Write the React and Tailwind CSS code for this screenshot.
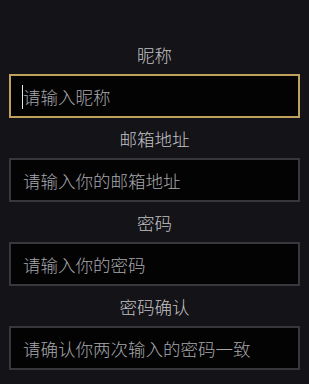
const fields = [
  { label: '昵称', placeholder: '请输入昵称', type: 'text', active: true },
  { label: '邮箱地址', placeholder: '请输入你的邮箱地址', type: 'email' },
  { label: '密码', placeholder: '请输入你的密码', type: 'password' },
  { label: '密码确认', placeholder: '请确认你两次输入的密码一致', type: 'password' },
];

const App = () => {
  return (
    <div
      className="min-h-[384px] w-full bg-[#131318] pt-[43px] pl-[9px] pr-[9px] font-light"
      style={{ fontFamily: '"Noto Sans CJK SC", "Noto Sans", sans-serif' }}
    >
      <form className="flex flex-col gap-[9px]">
        {fields.map((f) => (
          <div key={f.label} className="flex flex-col">
            <label className="block h-6 mb-[7px] text-center text-[17.5px] leading-6 text-[#c2c2c5]">
              {f.label}
            </label>
            <div className="relative">
              <input
                type={f.type}
                placeholder={f.placeholder}
                readOnly
                className={
                  'block w-full h-[44px] bg-[#030304] pl-3 text-[17.5px] font-light text-white placeholder:text-[#a8a8ac] outline-none caret-transparent border-2 ' +
                  (f.active ? 'border-[#bea15a]' : 'border-[#37373c]')
                }
              />
              {/* caret */}
              {f.active && (
                <span className="absolute left-[13px] top-[11px] h-[24px] w-px bg-[#e8e8e8]" />
              )}
            </div>
          </div>
        ))}
      </form>
    </div>
  );
};

export default App;
